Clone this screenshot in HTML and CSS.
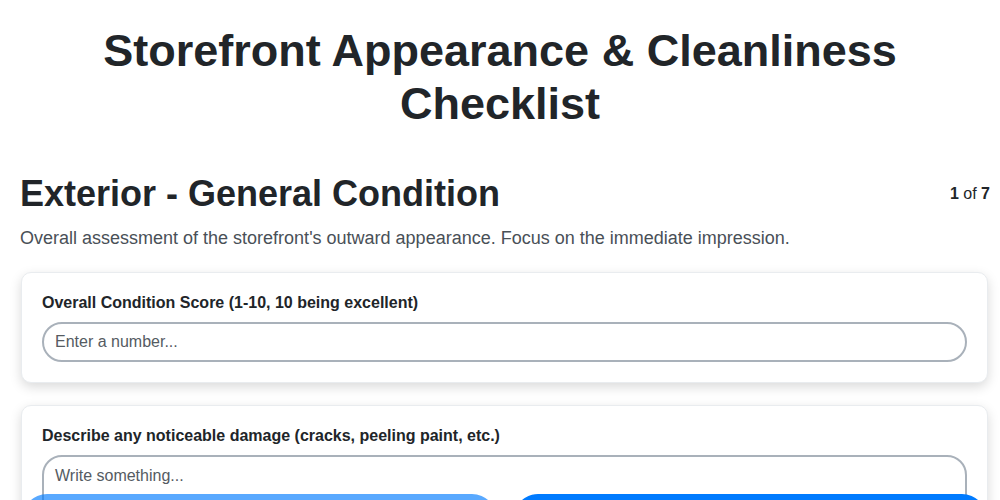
FILE: index.html
```html
<!DOCTYPE html>
<html lang="en">
<head>
<meta charset="utf-8">
<title>Storefront Appearance &amp; Cleanliness Checklist</title>
<link rel="stylesheet" href="styles.css">
</head>
<body>
<header class="page-header">
  <h1 class="page-title">Storefront Appearance &amp; Cleanliness Checklist</h1>
</header>
<main class="section">
  <div class="section-head">
    <h2 class="section-title">Exterior - General Condition</h2>
    <div class="progress"><b>1</b> of <b>7</b></div>
  </div>
  <p class="section-desc">Overall assessment of the storefront's outward appearance. Focus on the immediate impression.</p>
  <div class="card">
    <label class="field-label" for="score">Overall Condition Score (1-10, 10 being excellent)</label>
    <input class="field-input" id="score" type="text" placeholder="Enter a number...">
  </div>
  <div class="card">
    <label class="field-label" for="damage">Describe any noticeable damage (cracks, peeling paint, etc.)</label>
    <textarea class="field-textarea" id="damage" placeholder="Write something..."></textarea>
  </div>
</main>
<nav class="nav">
  <button class="btn btn-prev" disabled>Previous</button>
  <button class="btn btn-next">Next</button>
</nav>
</body>
</html>
```
FILE: styles.css
```css
html, body {
  margin: 0;
  padding: 0;
  background: #ffffff;
  font-family: "Liberation Sans", Arial, sans-serif;
  color: #212529;
}

.page-header {
  padding: 24px 20px 0;
  text-align: center;
}

.page-title {
  margin: 0;
  font-size: 45px;
  line-height: 53px;
  font-weight: 700;
}

.section {
  padding: 42px 10px 120px 20px;
}

.section-head {
  display: flex;
  align-items: center;
  justify-content: space-between;
}

.section-title {
  margin: 0;
  font-size: 36px;
  line-height: 44px;
  font-weight: 700;
}

.progress {
  font-size: 16px;
  color: #212529;
}

.section-desc {
  margin: 9px 0 20px;
  font-size: 18px;
  line-height: 27px;
  color: #495057;
}

.card {
  margin: 0 2px 22px 1px;
  padding: 20px;
  background: #ffffff;
  border: 1px solid #e9ecef;
  border-radius: 10px;
  box-shadow: 0 4px 12px rgba(0, 0, 0, 0.15);
  display: flex;
  flex-direction: column;
  gap: 10px;
}

.field-label {
  font-size: 16px;
  line-height: 19px;
  font-weight: 700;
  color: #212529;
}

.field-input,
.field-textarea {
  box-sizing: border-box;
  width: 100%;
  margin: 0;
  border: 2px solid #a9b1ba;
  border-radius: 20px;
  font-family: "Liberation Sans", Arial, sans-serif;
  font-size: 16px;
  color: #212529;
  background: #ffffff;
  outline: none;
}

.field-input {
  height: 40px;
  padding: 0 11px;
}

.field-textarea {
  height: 100px;
  padding: 9px 11px;
  resize: none;
  line-height: 20px;
}

.field-input::placeholder,
.field-textarea::placeholder {
  color: #555b62;
}

.nav {
  position: fixed;
  left: 22px;
  right: 13px;
  top: 494px;
  display: flex;
  gap: 16px;
}

.btn {
  flex: 1;
  height: 50px;
  border: none;
  border-radius: 25px;
  background: #007bff;
  color: #ffffff;
  font-family: "Liberation Sans", Arial, sans-serif;
  font-size: 16px;
  font-weight: 700;
}

.btn-prev {
  opacity: 0.65;
}
```
